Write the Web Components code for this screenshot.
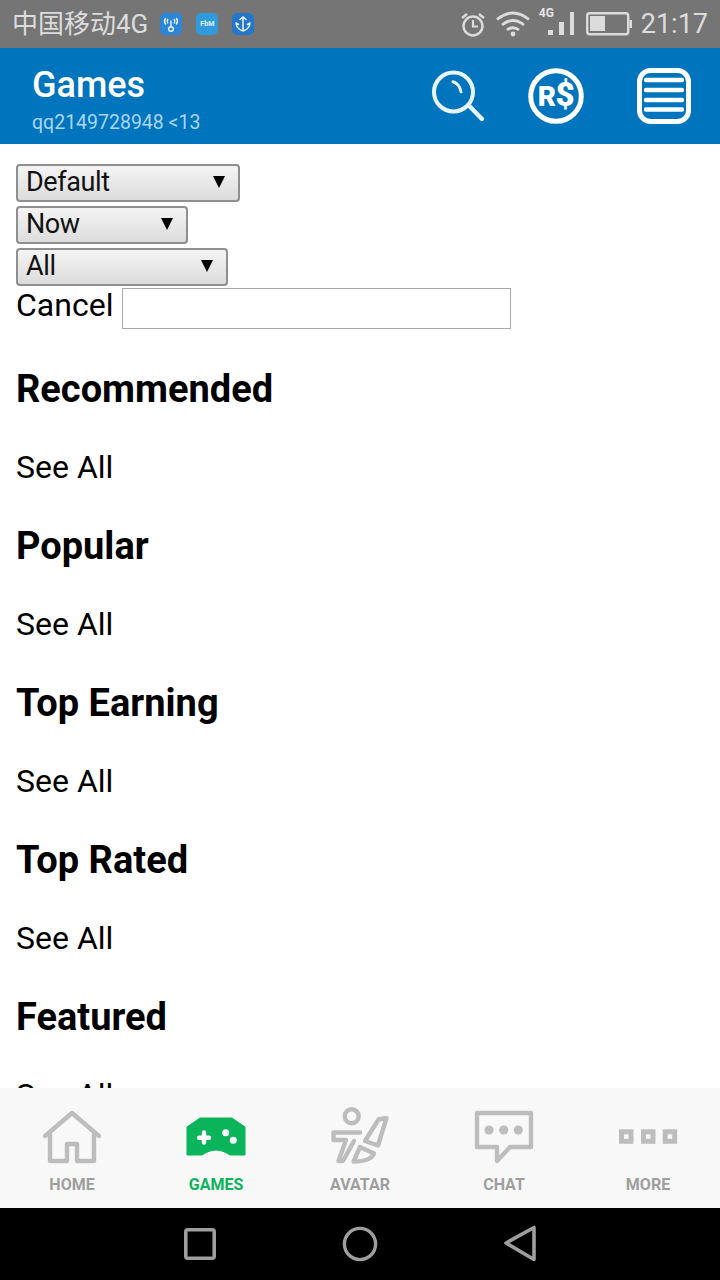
<!DOCTYPE html>
<html>
<head>
<meta charset="utf-8">
<title>Games</title>
<style>
  html,body{margin:0;padding:0;background:#fff}
  body{font-family:Roboto,"Noto Sans CJK SC",sans-serif;width:720px;height:1280px;overflow:hidden}
</style>
</head>
<body>
<app-shell>
  <status-bar slot="status" carrier="中国移动4G" time="21:17"></status-bar>
  <app-header slot="header" title="Games" sub="qq2149728948 &lt;13"></app-header>

  <filter-select width="224" label="Default"></filter-select>
  <filter-select width="172" label="Now"></filter-select>
  <filter-select width="212" label="All"></filter-select>
  <search-row></search-row>
  <game-section>Recommended</game-section>
  <game-section>Popular</game-section>
  <game-section>Top Earning</game-section>
  <game-section>Top Rated</game-section>
  <game-section>Featured</game-section>

  <tab-bar slot="tabs">
    <tab-item label="HOME" icon="home"></tab-item>
    <tab-item label="GAMES" icon="games" active></tab-item>
    <tab-item label="AVATAR" icon="avatar"></tab-item>
    <tab-item label="CHAT" icon="chat"></tab-item>
    <tab-item label="MORE" icon="more"></tab-item>
  </tab-bar>
  <nav-bar slot="nav"></nav-bar>
</app-shell>

<script>
class AppShell extends HTMLElement {
  constructor(){
    super();
    const s = this.attachShadow({mode:'open'});
    s.innerHTML = `
      <style>
        :host{display:flex;flex-direction:column;width:720px;height:1280px}
        .content{flex:1 1 auto;min-height:0;overflow:hidden;padding:20px 0 0 16px;background:#fff}
      </style>
      <slot name="status"></slot>
      <slot name="header"></slot>
      <div class="content"><slot></slot></div>
      <slot name="tabs"></slot>
      <slot name="nav"></slot>
    `;
  }
}

class StatusBar extends HTMLElement {
  constructor(){
    super();
    this.attachShadow({mode:'open'});
  }
  connectedCallback(){
    this.shadowRoot.innerHTML = `
      <style>
        :host{display:flex;align-items:center;flex:0 0 48px;height:48px;background:#757575;color:#dcdcdc;padding:0 12px 0 13px;box-sizing:border-box;font:27px/48px Roboto,"Noto Sans CJK SC",sans-serif}
        .carrier{font-size:26px;margin-right:12px;white-space:nowrap;margin-left:-1px}
        .apps{display:flex;gap:14px;align-items:center}
        .app{width:22px;height:22px;border-radius:5px;background:#2b86d8;display:block}
        .fbm{background:#2f9bdc;color:#e6f3fb;font:bold 7px/22px Roboto,sans-serif;text-align:center;letter-spacing:0}
        .right{margin-left:auto;display:flex;align-items:center}
        svg{display:block}
        .net{position:relative;width:36px;height:48px;margin:0 12px 0 7px}
        .net b{position:absolute;left:1px;top:6px;font:bold 12px/14px Roboto,sans-serif;color:#e4e4e4}
        .net svg{position:absolute;left:0;top:0}
        .time{margin-left:9px;font-size:27px}
      </style>
      <span class="carrier">${this.getAttribute('carrier')}</span>
      <div class="apps">
        <svg class="app" viewBox="0 0 22 22"><rect width="22" height="22" rx="5" fill="#2b86d8"/><g fill="none" stroke="#eaf4fc" stroke-width="1.4" stroke-linecap="round"><path d="M5.500 5.500q-2 2.500 0 5.500M16.500 5.500q2 2.500 0 5.500M7.700 6.500q-1 1.500 0 3.500M14.300 6.500q1 1.500 0 3.500M11 8v6"/><circle cx="11" cy="16" r="2.300"/></g></svg>
        <span class="app fbm">FbM</span>
        <svg class="app" viewBox="0 0 22 22"><rect width="22" height="22" rx="5" fill="#2376c9"/><g fill="none" stroke="#eaf4fc" stroke-width="1.5" stroke-linecap="round"><path d="M11 4v14M8 6.500l3-2.500 3 2.500M4 10q.5 6 7 8q6.500-2 7-8M4 10l2.500 1.500M18 10l-2.500 1.500"/></g></svg>
      </div>
      <div class="right">
        <svg width="26" height="26" viewBox="0 0 26 26" fill="none" stroke="#dcdcdc"><circle cx="13" cy="15" r="9.500" stroke-width="2.400"/><path d="M13 9v6.500h5" stroke-width="2.200"/><path d="M2 7l5-4M24 7l-5-4" stroke-width="2.400"/></svg>
        <svg style="margin-left:9px" width="36" height="26" viewBox="0 0 36 26" fill="none" stroke="#dcdcdc" stroke-width="2.800"><path d="M2 8.500q16-13 32 0M7 14q11-9 22 0M12 19q6-4.500 12 0"/><circle cx="18" cy="23" r="2.400" fill="#dcdcdc" stroke="none"/></svg>
        <div class="net">
          <svg width="36" height="48" viewBox="0 0 36 48" fill="#dcdcdc"><rect x="10" y="30" width="5" height="5"/><rect x="21" y="22" width="5" height="13"/><rect x="32" y="12" width="4" height="23"/></svg>
          <b>4G</b>
        </div>
        <svg width="46" height="24" viewBox="0 0 46 24" fill="none"><rect x="1.200" y="1.200" width="41" height="21" rx="2.500" stroke="#dcdcdc" stroke-width="2.400"/><rect x="4" y="4" width="15" height="15" fill="#dcdcdc"/><rect x="43.500" y="8" width="2.500" height="8" fill="#dcdcdc"/></svg>
        <span class="time">${this.getAttribute('time')}</span>
      </div>
    `;
  }
}

class AppHeader extends HTMLElement {
  constructor(){
    super();
    this.attachShadow({mode:'open'});
  }
  connectedCallback(){
    this.shadowRoot.innerHTML = `
      <style>
        :host{display:flex;align-items:center;flex:0 0 96px;height:96px;background:#0074bd;padding:0 28px 0 32px;box-sizing:border-box;font-family:Roboto,sans-serif}
        .titles{flex:1 1 auto;padding-top:8px}
        .t{font-size:36px;line-height:40px;font-weight:500;color:#fff}
        .s{font-size:19.500px;line-height:26px;color:#a9d6f2;margin-top:5px}
        svg{display:block}
        .icons{display:flex;align-items:center}
        .rs{margin-left:42px}
        .menu{margin-left:52px}
      </style>
      <div class="titles">
        <div class="t">${this.getAttribute('title')}</div>
        <div class="s">${this.getAttribute('sub').replace(/</g,'&lt;')}</div>
      </div>
      <div class="icons">
        <svg width="56" height="56" viewBox="0 0 56 56" fill="none" stroke="#e9f5fc" stroke-linecap="round"><circle cx="23.500" cy="24" r="19.500" stroke-width="4"/><path d="M38.300 37l13.700 14" stroke-width="4.400"/><path d="M23 13.700q6.500 2 8 10" stroke-width="3"/></svg>
        <svg class="rs" width="56" height="56" viewBox="0 0 56 56"><circle cx="28" cy="28" r="25.300" fill="none" stroke="#fff" stroke-width="5"/><text x="28" y="38" text-anchor="middle" font-family="Roboto,sans-serif" font-weight="900" font-size="28" letter-spacing="-.5" fill="#fff">R<tspan font-size="33">$</tspan></text></svg>
        <svg class="menu" width="56" height="56" viewBox="0 0 56 56" fill="none" stroke="#fff"><rect x="3.500" y="2.500" width="49" height="51" rx="11" stroke-width="5"/><path d="M10 12h36M10 22h36M10 32h36M10 41.500h36" stroke-width="4.400" stroke-linecap="round"/></svg>
      </div>
    `;
  }
}

class FilterSelect extends HTMLElement {
  constructor(){
    super();
    this.attachShadow({mode:'open'});
  }
  connectedCallback(){
    const w = this.getAttribute('width');
    this.shadowRoot.innerHTML = `
      <style>
        :host{display:block;width:${w}px;height:38px;margin-bottom:4px;box-sizing:border-box;border:2px solid #8f8f8f;border-radius:4px;background:linear-gradient(#f4f4f4,#dcdcdc);font:27px/32px Roboto,sans-serif;letter-spacing:-.4px;color:#111;position:relative;padding-left:8px;white-space:nowrap}
        .arrow{position:absolute;right:13px;top:10px;width:0;height:0;border-left:6px solid transparent;border-right:6px solid transparent;border-top:12px solid #000}
      </style>
      <span>${this.getAttribute('label')}</span><span class="arrow"></span>
    `;
  }
}

class SearchRow extends HTMLElement {
  constructor(){
    super();
    const s = this.attachShadow({mode:'open'});
    s.innerHTML = `
      <style>
        :host{display:flex;align-items:flex-start;height:41px;margin-top:-2px;font:32px/34px Roboto,sans-serif;color:#000}
        .lbl{margin-right:9px}
        .box{width:389px;height:41px;box-sizing:border-box;border:1px solid #a9a9a9;background:#fff}
      </style>
      <span class="lbl">Cancel</span><div class="box"></div>
    `;
  }
}

class GameSection extends HTMLElement {
  constructor(){
    super();
    const s = this.attachShadow({mode:'open'});
    s.innerHTML = `
      <style>
        :host{display:block;height:157px;font-family:Roboto,sans-serif;color:#000}
        h2{margin:0;height:79px;font-size:38px;line-height:81px;font-weight:700}
        .all{height:78px;font-size:32px;line-height:78px}
      </style>
      <h2><slot></slot></h2>
      <div class="all">See All</div>
    `;
  }
  connectedCallback(){
    if(!this.previousElementSibling.matches('game-section')) this.style.marginTop = '20px';
  }
}

const TAB_ICONS = {
  home:`<g fill="none" stroke="#bdbdbd" stroke-width="4.400" stroke-linejoin="round" stroke-linecap="round"><path d="M3 28L30 5l27 23"/><path d="M8 26v27h17V36h10v17h17V26"/></g>`,
  games:`<path d="M14 10h32l13 9v28H44q-7-5-14-5t-14 5H1V19z" fill="#0ab45a" stroke="#0ab45a" stroke-width="1" stroke-linejoin="round"/><path d="M18 24.500v10M13 29.700h10" stroke="#fff" stroke-width="4.400" stroke-linecap="round"/><circle cx="39.700" cy="24.700" r="3.500" fill="#fff"/><circle cx="47.300" cy="32.300" r="3.500" fill="#fff"/>`,
  avatar:`<g fill="none" stroke="#bdbdbd" stroke-width="4.400" stroke-linejoin="round" stroke-linecap="round"><circle cx="21.700" cy="8.300" r="7"/><path d="M30 24.500H3.500V32H16L8.500 53H13l11-20"/><path d="M56.500 10l-8 1.500L35 33l13 4.500z"/><path d="M23.500 53.500L30 39l14 6.500q-3 8-20.500 8z"/></g>`,
  chat:`<path d="M3 5h54v34H36L23 53V39H3z" fill="none" stroke="#bdbdbd" stroke-width="4.400" stroke-linejoin="round"/><g fill="#bdbdbd"><circle cx="15" cy="22" r="4.600"/><circle cx="29.700" cy="22" r="4.600"/><circle cx="44.300" cy="22" r="4.600"/></g>`,
  more:`<g fill="none" stroke="#bdbdbd" stroke-width="5"><rect x="3.500" y="23.800" width="9.500" height="9.500"/><rect x="25.500" y="23.800" width="9.500" height="9.500"/><rect x="47.200" y="23.800" width="9.500" height="9.500"/></g>`
};

class TabItem extends HTMLElement {
  constructor(){
    super();
    this.attachShadow({mode:'open'});
  }
  connectedCallback(){
    const on = this.hasAttribute('active');
    this.shadowRoot.innerHTML = `
      <style>
        :host{display:flex;flex-direction:column;align-items:center;flex:1 1 0;padding-top:20px;box-sizing:border-box;font:bold 16px/20px Roboto,sans-serif;color:${on?'#0ab45a':'#9e9e9e'}}
        svg{display:block;overflow:visible}
        span{margin-top:7px}
      </style>
      <svg width="60" height="60" viewBox="0 0 60 60">${TAB_ICONS[this.getAttribute('icon')]}</svg>
      <span>${this.getAttribute('label')}</span>
    `;
  }
}

class TabBar extends HTMLElement {
  constructor(){
    super();
    const s = this.attachShadow({mode:'open'});
    s.innerHTML = `
      <style>:host{display:flex;flex:0 0 120px;height:120px;background:#f8f8f8}</style>
      <slot></slot>
    `;
  }
}

class NavBar extends HTMLElement {
  constructor(){
    super();
    const s = this.attachShadow({mode:'open'});
    s.innerHTML = `
      <style>
        :host{display:flex;justify-content:center;align-items:center;gap:124px;flex:0 0 72px;height:72px;background:#000}
        svg{display:block}
      </style>
      <svg width="36" height="36" viewBox="0 0 36 36" fill="none" stroke="#9e9e9e" stroke-width="3.600"><rect x="3.800" y="3.800" width="28.400" height="28.400" rx="2"/></svg>
      <svg width="36" height="36" viewBox="0 0 36 36" fill="none" stroke="#9e9e9e" stroke-width="3.400"><circle cx="18" cy="18" r="15.600"/></svg>
      <svg width="36" height="38" viewBox="0 0 36 38" fill="none" stroke="#9e9e9e" stroke-width="3.600" stroke-linejoin="round"><path d="M4 18L32 2.500v32z"/></svg>
    `;
  }
}

customElements.define('app-shell', AppShell);
customElements.define('status-bar', StatusBar);
customElements.define('app-header', AppHeader);
customElements.define('filter-select', FilterSelect);
customElements.define('search-row', SearchRow);
customElements.define('game-section', GameSection);
customElements.define('tab-item', TabItem);
customElements.define('tab-bar', TabBar);
customElements.define('nav-bar', NavBar);
</script>
</body>
</html>
